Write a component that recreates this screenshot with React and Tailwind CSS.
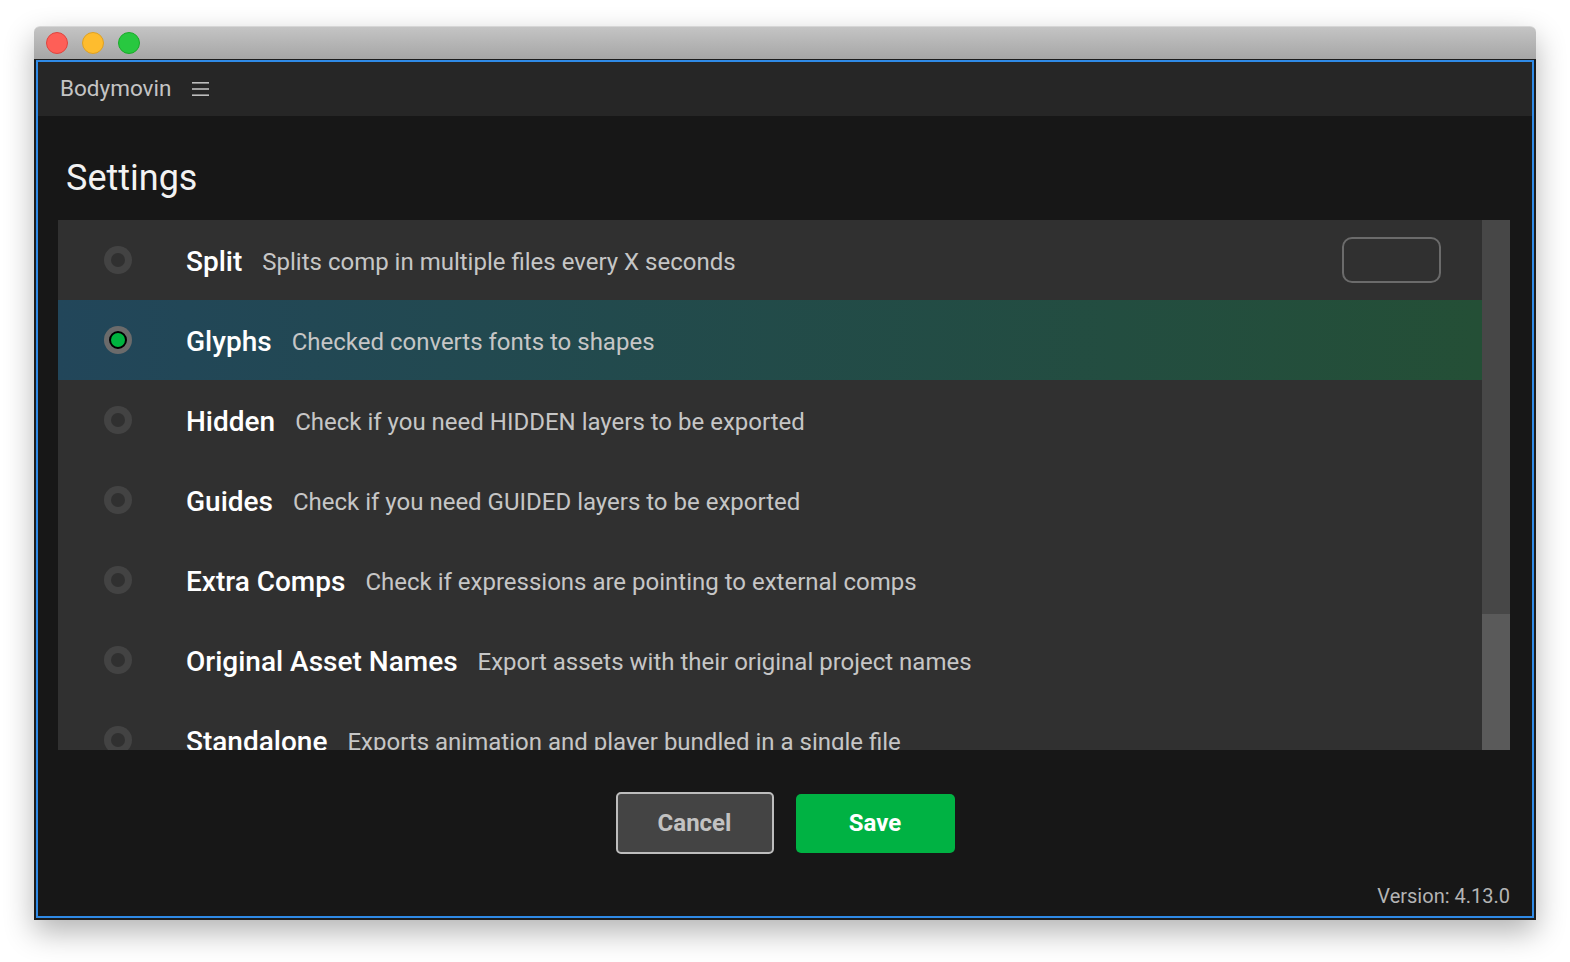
import React from "react";

const settings = [
  { name: "Split", desc: "Splits comp in multiple files every X seconds", input: true },
  { name: "Glyphs", desc: "Checked converts fonts to shapes", active: true },
  { name: "Hidden", desc: "Check if you need HIDDEN layers to be exported" },
  { name: "Guides", desc: "Check if you need GUIDED layers to be exported" },
  { name: "Extra Comps", desc: "Check if expressions are pointing to external comps" },
  { name: "Original Asset Names", desc: "Export assets with their original project names" },
  { name: "Standalone", desc: "Exports animation and player bundled in a single file" },
];

function Radio({ on }) {
  if (on) {
    return (
      <div className="w-[28px] h-[28px] rounded-full bg-[#6b6b6b] flex items-center justify-center shrink-0">
        <div className="w-[18px] h-[18px] rounded-full bg-[#00b43f] border-2 border-black" />
      </div>
    );
  }
  return (
    <div className="w-[28px] h-[28px] rounded-full bg-[#434343] flex items-center justify-center shrink-0">
      <div className="w-[14px] h-[14px] rounded-full bg-[#303030]" />
    </div>
  );
}

function Row({ item }) {
  return (
    <div
      className={
        "h-[80px] shrink-0 flex items-center pl-[46px] " +
        (item.active ? "bg-linear-to-r from-[#22465a] to-[#244f36]" : "bg-[#303030]")
      }
    >
      <Radio on={item.active} />
      <span className="ml-[54px] mt-[3px] text-[28px] font-medium text-white whitespace-nowrap">{item.name}</span>
      <span className="ml-[20px] mt-[3px] text-[24px] text-[#c6c6c6] whitespace-nowrap">{item.desc}</span>
      {item.input && (
        <div className="ml-auto mr-[41px] w-[99px] h-[46px] rounded-[10px] border-2 border-[#6b6b6b]" />
      )}
    </div>
  );
}

export default function App() {
  return (
    <div
      className="w-[1570px] h-[962px] bg-white pt-[26px] pl-[34px]"
      style={{ fontFamily: "Roboto, 'Liberation Sans', sans-serif" }}
    >
      <div className="w-[1502px] rounded-t-[6px] shadow-[0_12px_30px_rgba(0,0,0,0.3)]">
        {/* title bar */}
        <div className="h-[33px] rounded-t-[6px] bg-linear-to-b from-[#c4c4c4] to-[#a6a6a6] border-t border-[#d6d6d6] flex items-center pl-[12px] gap-[14px]">
          <div className="w-[22px] h-[22px] rounded-full bg-[#fe5f57] border border-[#e0443e]" />
          <div className="w-[22px] h-[22px] rounded-full bg-[#febc2e] border border-[#dea123]" />
          <div className="w-[22px] h-[22px] rounded-full bg-[#28c840] border border-[#1aab29]" />
        </div>

        <div className="border-x-2 border-b-2 border-t-[1px] border-[#1c1c1c]">
          <div className="border-2 border-[#2f8ae6] bg-[#171717] flex flex-col">
            {/* header */}
            <div className="h-[54px] bg-[#262626] flex items-center pl-[22px]">
              <span className="text-[22.5px] text-[#c4c4c4]">Bodymovin</span>
              <svg className="ml-[21px]" width="17" height="16" viewBox="0 0 17 16">
                <rect x="0" y="1" width="17" height="1.6" fill="#bdbdbd" />
                <rect x="0" y="7.2" width="17" height="1.6" fill="#bdbdbd" />
                <rect x="0" y="13.4" width="17" height="1.6" fill="#bdbdbd" />
              </svg>
            </div>

            {/* title */}
            <div className="pt-[44px] pb-[24px] pl-[28px]">
              <h1 className="text-[36px] leading-none text-[#f2f2f2]">Settings</h1>
            </div>

            {/* list */}
            <div className="ml-[20px] mr-[22px] h-[530px] flex overflow-hidden">
              <div className="flex-1 flex flex-col overflow-hidden">
                {settings.map((s) => (
                  <Row key={s.name} item={s} />
                ))}
              </div>
              <div className="w-[28px] bg-[#474747] flex flex-col">
                <div className="flex-1" />
                <div className="h-[136px] bg-[#5a5a5a]" />
              </div>
            </div>

            {/* footer */}
            <div className="h-[166px] flex flex-col">
              <div className="pt-[42px] flex justify-center items-center gap-[22px]">
                <button className="w-[158px] h-[62px] rounded-[5px] bg-[#444444] border-2 border-[#bdbdbd] text-[24px] font-bold text-[#c2c2c2]">
                  Cancel
                </button>
                <button className="w-[159px] h-[59px] rounded-[5px] bg-[#00b243] text-[24px] font-bold text-white">
                  Save
                </button>
              </div>
              <div className="mt-[32px] pr-[22px] text-right text-[20px] leading-none text-[#b4b4b4]">
                Version: 4.13.0
              </div>
            </div>
          </div>
        </div>
      </div>
    </div>
  );
}
